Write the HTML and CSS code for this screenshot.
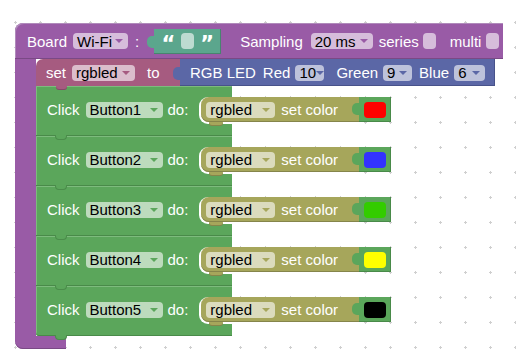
FILE: index.html
```html
<!DOCTYPE html>
<html lang="en">
<head>
    <meta charset="UTF-8">
    <meta name="viewport" content="width=device-width, initial-scale=1.0">
    <title>Blocks</title>
    <link rel="stylesheet" href="styles.css">
</head>
<body>
    <div class="ws">
        <!-- workspace grid -->
        <svg class="grid" width="516" height="363">
            <defs>
                <pattern id="dots" width="25" height="25" patternUnits="userSpaceOnUse">
                    <rect x="14" y="22" width="3" height="1" fill="#cfcfcf"/>
                    <rect x="15" y="21" width="1" height="3" fill="#cfcfcf"/>
                </pattern>
            </defs>
            <rect width="516" height="363" fill="url(#dots)"/>
        </svg>

        <div class="board">
            <div class="board-head">
                <span class="lbl">Board</span>
                <span class="fld f-wifi">Wi-Fi<i class="arr"></i></span>
                <span class="lbl colon">:</span>
                <div class="txt-blk">
                    <span class="q">“</span><span class="fld tf"></span><span class="q">”</span>
                </div>
                <span class="lbl sampling">Sampling</span>
                <span class="fld f-ms">20 ms<i class="arr"></i></span>
                <span class="lbl series">series</span>
                <span class="chk"></span>
                <span class="lbl multi">multi</span>
                <span class="chk chk2"></span>
            </div>

            <div class="board-body">
                <div class="arm"></div>
                <div class="stack">
                    <div class="set-row">
                        <div class="set-blk">
                            <span class="lbl">set</span>
                            <span class="fld f-var">rgbled<i class="arr"></i></span>
                            <span class="lbl to">to</span>
                        </div>
                        <div class="rgb-blk">
                            <span class="lbl">RGB LED</span>
                            <span class="lbl red">Red</span>
                            <span class="fld f-pin">10<i class="arr"></i></span>
                            <span class="lbl green">Green</span>
                            <span class="fld f-pin">9<i class="arr"></i></span>
                            <span class="lbl blue">Blue</span>
                            <span class="fld f-pin f-six">6<i class="arr"></i></span>
                        </div>
                    </div>

                    <div class="click">
                        <div class="click-row">
                            <span class="lbl">Click</span>
                            <span class="fld f-btn">Button1<i class="arr"></i></span>
                            <span class="lbl do">do:</span>
                            <div class="olive">
                                <span class="fld f-led">rgbled<i class="arr"></i></span>
                                <span class="lbl setc">set color</span>
                            </div>
                            <div class="colour"><span class="sw" style="background:#ff0000"></span></div>
                        </div>
                    </div>
                    <div class="click">
                        <div class="click-row">
                            <span class="lbl">Click</span>
                            <span class="fld f-btn">Button2<i class="arr"></i></span>
                            <span class="lbl do">do:</span>
                            <div class="olive">
                                <span class="fld f-led">rgbled<i class="arr"></i></span>
                                <span class="lbl setc">set color</span>
                            </div>
                            <div class="colour"><span class="sw" style="background:#3333ff"></span></div>
                        </div>
                    </div>
                    <div class="click">
                        <div class="click-row">
                            <span class="lbl">Click</span>
                            <span class="fld f-btn">Button3<i class="arr"></i></span>
                            <span class="lbl do">do:</span>
                            <div class="olive">
                                <span class="fld f-led">rgbled<i class="arr"></i></span>
                                <span class="lbl setc">set color</span>
                            </div>
                            <div class="colour"><span class="sw" style="background:#33cc00"></span></div>
                        </div>
                    </div>
                    <div class="click">
                        <div class="click-row">
                            <span class="lbl">Click</span>
                            <span class="fld f-btn">Button4<i class="arr"></i></span>
                            <span class="lbl do">do:</span>
                            <div class="olive">
                                <span class="fld f-led">rgbled<i class="arr"></i></span>
                                <span class="lbl setc">set color</span>
                            </div>
                            <div class="colour"><span class="sw" style="background:#ffff00"></span></div>
                        </div>
                    </div>
                    <div class="click">
                        <div class="click-row">
                            <span class="lbl">Click</span>
                            <span class="fld f-btn">Button5<i class="arr"></i></span>
                            <span class="lbl do">do:</span>
                            <div class="olive">
                                <span class="fld f-led">rgbled<i class="arr"></i></span>
                                <span class="lbl setc">set color</span>
                            </div>
                            <div class="colour"><span class="sw" style="background:#000000"></span></div>
                        </div>
                    </div>
                </div>
            </div>
            <div class="board-foot"></div>
        </div>
    </div>
</body>
</html>
```

FILE: styles.css
```css
body{
    margin:0;
    background:#fff;
    font-family:"Liberation Sans", Arial, sans-serif;
    font-size:15px;
}
.ws{
    position:relative;
    width:516px;height:363px;
    overflow:hidden;
}
.grid{
    position:absolute;top:0;left:0;
}
.board{
    position:relative;z-index:1;
    padding:23px 0 0 15px;
}

/* common pieces */
.lbl{
    color:#fff;
    white-space:nowrap;
    flex-shrink:0;
}
.fld{
    display:inline-flex;align-items:center;
    flex-shrink:0;
    box-sizing:border-box;
    height:16px;
    padding:0 5px 0 4px;
    border-radius:4px;
    background:rgba(255,255,255,.6);
    color:#000;
    white-space:nowrap;
}
.arr{
    width:0;height:0;
    margin-left:auto;
    border-left:4px solid transparent;
    border-right:4px solid transparent;
    border-top:4px solid var(--c);
}
.chk{
    flex-shrink:0;
    width:13px;height:16px;
    border-radius:4px;
    background:rgba(255,255,255,.6);
}

/* Board block */
.board-head{
    --c:#995ba6;
    display:flex;align-items:center;
    box-sizing:border-box;
    width:488px;height:36px;
    padding-left:12px;
    background:#995ba6;
    border-radius:8px 0 0 0;
    box-shadow:inset 0 -1px 0 #7a4985, inset 1px 1px 0 #b08abb;
}
.f-wifi{width:55px;margin-left:6px;}
.colon{margin-left:7px;}
.txt-blk{
    position:relative;
    display:flex;align-items:center;justify-content:center;
    gap:6px;
    flex-shrink:0;
    width:67px;height:25px;
    margin-left:15px;
    background:#5ba68d;
    box-shadow:inset -1px -1px 0 #48846f;
}
.txt-blk::before{
    content:"";
    position:absolute;left:-7px;top:7px;
    width:7px;height:12px;
    background:#5ba68d;
    border-radius:5px 0 0 5px;
}
.q{
    color:#fff;
    font-family:"DejaVu Sans", sans-serif;
    font-weight:bold;
    font-size:21px;
    line-height:18px;
    height:12px;
}
.tf{width:13px;padding:0;}
.sampling{margin-left:19px;}
.f-ms{width:62px;margin-left:8px;}
.series{margin-left:6px;}
.chk{margin-left:4px;}
.multi{margin-left:14px;}
.chk2{margin-left:5px;}

.board-body{
    display:flex;
}
.arm{
    flex-shrink:0;
    width:21px;
    background:#995ba6;
}
.stack{
    display:flex;flex-direction:column;
}
.board-foot{
    width:51px;height:13px;
    background:#995ba6;
    border-radius:0 0 0 8px;
    box-shadow:inset 0 -1px 0 #7a4985;
}

/* set rgbled to RGB LED */
.set-row{
    display:flex;
    height:27px;
}
.set-blk{
    --c:#a65b80;
    position:relative;
    display:flex;align-items:center;
    box-sizing:border-box;
    width:144px;
    padding-left:10px;
    background:#a65b80;
    border-radius:7px 0 0 0;
}
.set-blk::after{
    content:"";
    position:absolute;left:20px;bottom:-3px;z-index:3;
    width:11px;height:3px;
    background:#a65b80;
    border-radius:0 0 3px 3px;
    box-shadow:0 1px 0 #84486a;
}
.f-var{width:63px;margin-left:6px;}
.to{margin-left:12px;}
.rgb-blk{
    --c:#5b67a6;
    position:relative;
    display:flex;align-items:center;
    box-sizing:border-box;
    width:315px;
    padding-left:10px;
    background:#5b67a6;
    box-shadow:inset -1px -1px 0 #48528a;
}
.rgb-blk::before{
    content:"";
    position:absolute;left:-7px;top:8px;
    width:7px;height:13px;
    background:#5b67a6;
    border-radius:5px 0 0 5px;
}
.red{margin-left:7px;}
.f-pin{width:29px;margin-left:5px;}
.green{margin-left:12px;}
.blue{margin-left:7px;}
.f-six{width:31px;}

/* Click blocks */
.click{
    --c:#5ba65b;
    position:relative;
    box-sizing:border-box;
    width:196px;height:50px;
    padding:11px 0 0 11px;
    background:#5ba65b;
    box-shadow:inset 0 -1px 0 #498a49, inset 1px 1px 0 #7dbb7d;
}
.click::after{
    content:"";
    position:absolute;left:19px;bottom:-4px;z-index:2;
    width:10px;height:4px;
    background:#5ba65b;
    border:1px solid #4b8c4b;border-top:0;
    border-radius:0 0 4px 4px;
}
.click:last-child{border-radius:0 0 0 3px;}
.click-row{
    display:flex;align-items:center;
    height:25px;
}
.f-btn{width:77px;margin-left:6px;}
.do{margin-left:5px;}
.olive{
    --c:#a6a65b;
    position:relative;
    display:flex;align-items:center;
    flex-shrink:0;
    box-sizing:border-box;
    width:158px;height:25px;
    margin-left:13px;
    padding-left:5px;
    background:#a6a65b;
    border-radius:8px 0 0 8px;
    box-shadow:-1px 1px 0 1px #fff, inset 0 -1px 0 #85854a;
}
.olive::after{
    content:"";
    position:absolute;left:8px;bottom:-3px;
    width:14px;height:3px;
    background:#a6a65b;
    border-radius:0 0 4px 4px;
    box-shadow:0 1px 0 #85854a;
}
.f-led{width:69px;}
.setc{margin-left:6px;}
.colour{
    position:relative;
    display:flex;align-items:center;
    flex-shrink:0;
    box-sizing:border-box;
    width:32px;height:25px;
    padding-left:5px;
    background:#5ba65b;
    box-shadow:inset -1px -1px 0 #498a49;
}
.colour::before{
    content:"";
    position:absolute;left:-7px;top:6px;
    width:7px;height:12px;
    background:#5ba65b;
    border-radius:5px 0 0 5px;
}
.sw{
    width:22px;height:16px;
    border-radius:4px;
}
```
